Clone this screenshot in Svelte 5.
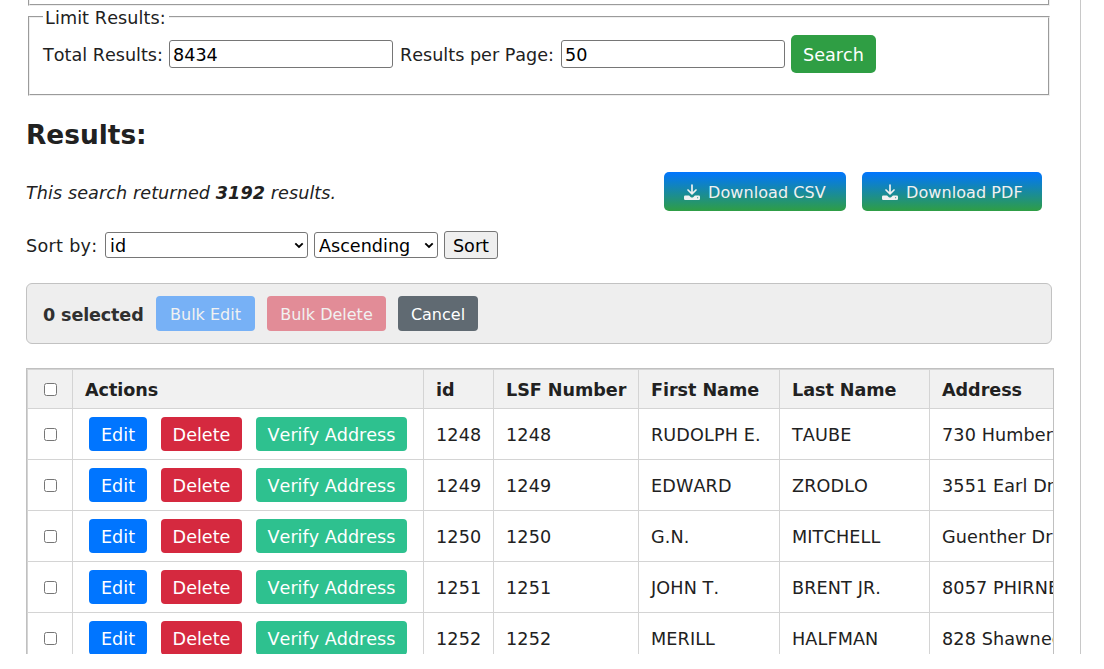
<script>
  const columns = ['id', 'LSF Number', 'First Name', 'Last Name', 'Address'];
  const rows = [
    ['1248', '1248', 'RUDOLPH E.', 'TAUBE', '730 Humber'],
    ['1249', '1249', 'EDWARD', 'ZRODLO', '3551 Earl Dr'],
    ['1250', '1250', 'G.N.', 'MITCHELL', 'Guenther Dr'],
    ['1251', '1251', 'JOHN T.', 'BRENT JR.', '8057 PHIRNE'],
    ['1252', '1252', 'MERILL', 'HALFMAN', '828 Shawnee']
  ];
</script>

{#snippet downloadIcon()}
  <svg width="16" height="16" viewBox="0 0 16 16" fill="none">
    <path d="M8 1v8.4M4 6 8 9.8 12 6" stroke="currentColor" stroke-width="1.7" stroke-linecap="round" stroke-linejoin="round" />
    <path fill="currentColor" fill-rule="evenodd" d="M1.200 11.500h3.900l1.500 1.400q1.400 1 2.800 0l1.500-1.400h3.900q1.200 0 1.200 1.200v2.100q0 1.200-1.200 1.200H1.200Q0 16 0 14.800v-2.100q0-1.200 1.200-1.200ZM13.100 13.200v1h1v-1Z" />
  </svg>
{/snippet}

<main class="page">
  <fieldset class="previous"></fieldset>
  <fieldset class="limits">
    <legend>Limit Results:</legend>
    <div class="limit-row">
      <label for="total">Total Results:</label>
      <input id="total" class="field total" type="text" value="8434" />
      <label for="per-page">Results per Page:</label>
      <input id="per-page" class="field" type="text" value="50" />
      <button class="search">Search</button>
    </div>
  </fieldset>

  <h2>Results:</h2>

  <div class="summary">
    <em>This search returned <strong>3192</strong> results.</em>
    <button class="download csv">{@render downloadIcon()}<span>Download CSV</span></button>
    <button class="download pdf">{@render downloadIcon()}<span>Download PDF</span></button>
  </div>

  <div class="sort">
    <label for="sort-column">Sort by:</label>
    <select id="sort-column" class="column"><option>id</option></select>
    <select class="direction"><option>Ascending</option></select>
    <button class="sort-button">Sort</button>
  </div>

  <div class="bulk">
    <strong>0 selected</strong>
    <button class="bulk-edit">Bulk Edit</button>
    <button class="bulk-delete">Bulk Delete</button>
    <button class="cancel">Cancel</button>
  </div>

  <div class="table-wrap">
    <table>
      <colgroup>
        <col style="width: 45px" /><col style="width: 351px" /><col style="width: 70px" />
        <col style="width: 145px" /><col style="width: 141px" /><col style="width: 150px" /><col style="width: 220px" />
      </colgroup>
      <thead>
        <tr>
          <th class="check"><input type="checkbox" /></th>
          <th>Actions</th>
          {#each columns as column}<th>{column}</th>{/each}
        </tr>
      </thead>
      <tbody>
        {#each rows as row}
          <tr>
            <td class="check"><input type="checkbox" /></td>
            <td>
              <div class="actions">
                <button class="edit">Edit</button>
                <button class="delete">Delete</button>
                <button class="verify">Verify Address</button>
              </div>
            </td>
            {#each row as cell}<td class="value">{cell}</td>{/each}
          </tr>
        {/each}
      </tbody>
    </table>
  </div>
</main>

<style>
  :global(body) { margin: 0; background: #fff; overflow: hidden; }
  .page {
    box-sizing: border-box;
    width: 1081px;
    height: 654px;
    overflow: hidden;
    padding: 0 26px;
    border-right: 1px solid #c8c8c8;
    font: 17.6px/21px Verdana, "DejaVu Sans", sans-serif;
    font-kerning: none;
    color: #212121;
    white-space: nowrap;
  }
  .page * { box-sizing: border-box; }
  button, input, select { font: inherit; font-kerning: none; margin: 0; }
  button { padding: 2px 0 0; border: 0; flex: none; text-align: center; }
  label, legend { flex: none; }
  input[type="text"] { flex: none; }

  fieldset { width: 1022px; margin: 0 2px; padding: 0 13px; border: 2px groove #efefef; }
  .previous { height: 16px; margin-top: -10px; }
  .limits { height: 90px; }
  legend { width: 126px; height: 21px; padding: 0 2px; line-height: 25px; letter-spacing: 0.1px; }
  .limit-row { display: flex; align-items: center; height: 38px; margin-top: 8px; }
  .limit-row label { width: 126px; padding-top: 2px; }
  .field { width: 224px; height: 28px; padding: 3px 3px 1px; border: 1px solid #767676; border-radius: 3px; color: #000; background: #fff; }
  .total { margin-right: 7px; }
  .limit-row .total + label { width: 161px; }
  .search { width: 85px; height: 38px; margin-left: 6px; border-radius: 5px; background: #2f9e44; color: #fff; }

  h2 { margin: 23px 0 -1px; font-size: 26.4px; line-height: 32px; }

  .summary { display: flex; align-items: center; height: 39px; margin-top: 22px; }
  .summary em { width: 638px; padding-top: 3px; letter-spacing: 0.08px; }
  .download { display: flex; align-items: center; height: 39px; padding: 1px 0 0 20px; gap: 8px; border-radius: 5px; background: linear-gradient(#0075ff, #2f9e44); color: #f1f1f1; font-size: 16px; letter-spacing: 0.08px; }
  .csv { width: 182px; margin-right: 16px; }
  .pdf { width: 180px; }

  .sort { display: flex; align-items: center; height: 28px; margin-top: 20px; }
  .sort label { width: 79px; padding-top: 2px; letter-spacing: 0.3px; }
  select {
    appearance: none;
    height: 26px;
    padding: 2px 4px 0;
    border: 1px solid #767676;
    border-radius: 3px;
    background: #fff url("data:image/svg+xml,%3Csvg xmlns='http://www.w3.org/2000/svg' width='10' height='7'%3E%3Cpath d='M1.300 1.400 5 5l3.700-3.600' fill='none' stroke='black' stroke-width='1.900'/%3E%3C/svg%3E") no-repeat right 3px top 9px;
    color: #000;
  }
  .column { width: 203px; margin-right: 6px; }
  .direction { width: 124px; margin-right: 6px; }
  .sort-button { width: 54px; height: 28px; border: 1px solid #767676; border-radius: 3px; background: #efefef; color: #000; }

  .bulk { display: flex; align-items: center; gap: 12px; width: 1026px; height: 61px; margin-top: 24px; padding: 0 16px; border: 1px solid #c2c2c2; border-radius: 6px; background: #eee; }
  .bulk strong { width: 101px; padding-top: 3px; letter-spacing: -0.15px; color: #303030; }
  .bulk button { height: 35px; border-radius: 4px; font-size: 16px; color: #f1f1f1; }
  .bulk .bulk-edit { width: 99px; background: #77b1f6; }
  .bulk .bulk-delete { width: 119px; background: #e28c97; }
  .bulk .cancel { width: 80px; background: #606a72; color: #fff; }

  .table-wrap { width: 1028px; height: 320px; margin-top: 24px; overflow: hidden; border: 1px solid #c0c0c0; }
  table { width: 1123px; table-layout: fixed; border-collapse: separate; border-spacing: 0; border: 0 solid #d4d4d4; border-width: 1px 0 0 1px; }
  th, td { height: 51px; padding: 3px 12px 0; border: 0 solid #d4d4d4; border-width: 0 1px 1px 0; text-align: left; vertical-align: middle; }
  th { height: 39px; background: #f1f1f1; font-weight: bold; letter-spacing: -0.05px; }
  .value { letter-spacing: 0.12px; }
  .check { padding: 0; text-align: center; }
  .check input { display: block; width: 13px; height: 13px; margin: 1px auto 0; }
  .actions { display: flex; gap: 14px; margin-top: -3px; padding-left: 4px; }
  .actions button { height: 34px; border-radius: 4px; color: #fff; }
  .edit { width: 58px; background: #0075ff; }
  .delete { width: 81px; background: #d5293f; }
  .verify { width: 151px; background: #2ec18f; }
</style>
